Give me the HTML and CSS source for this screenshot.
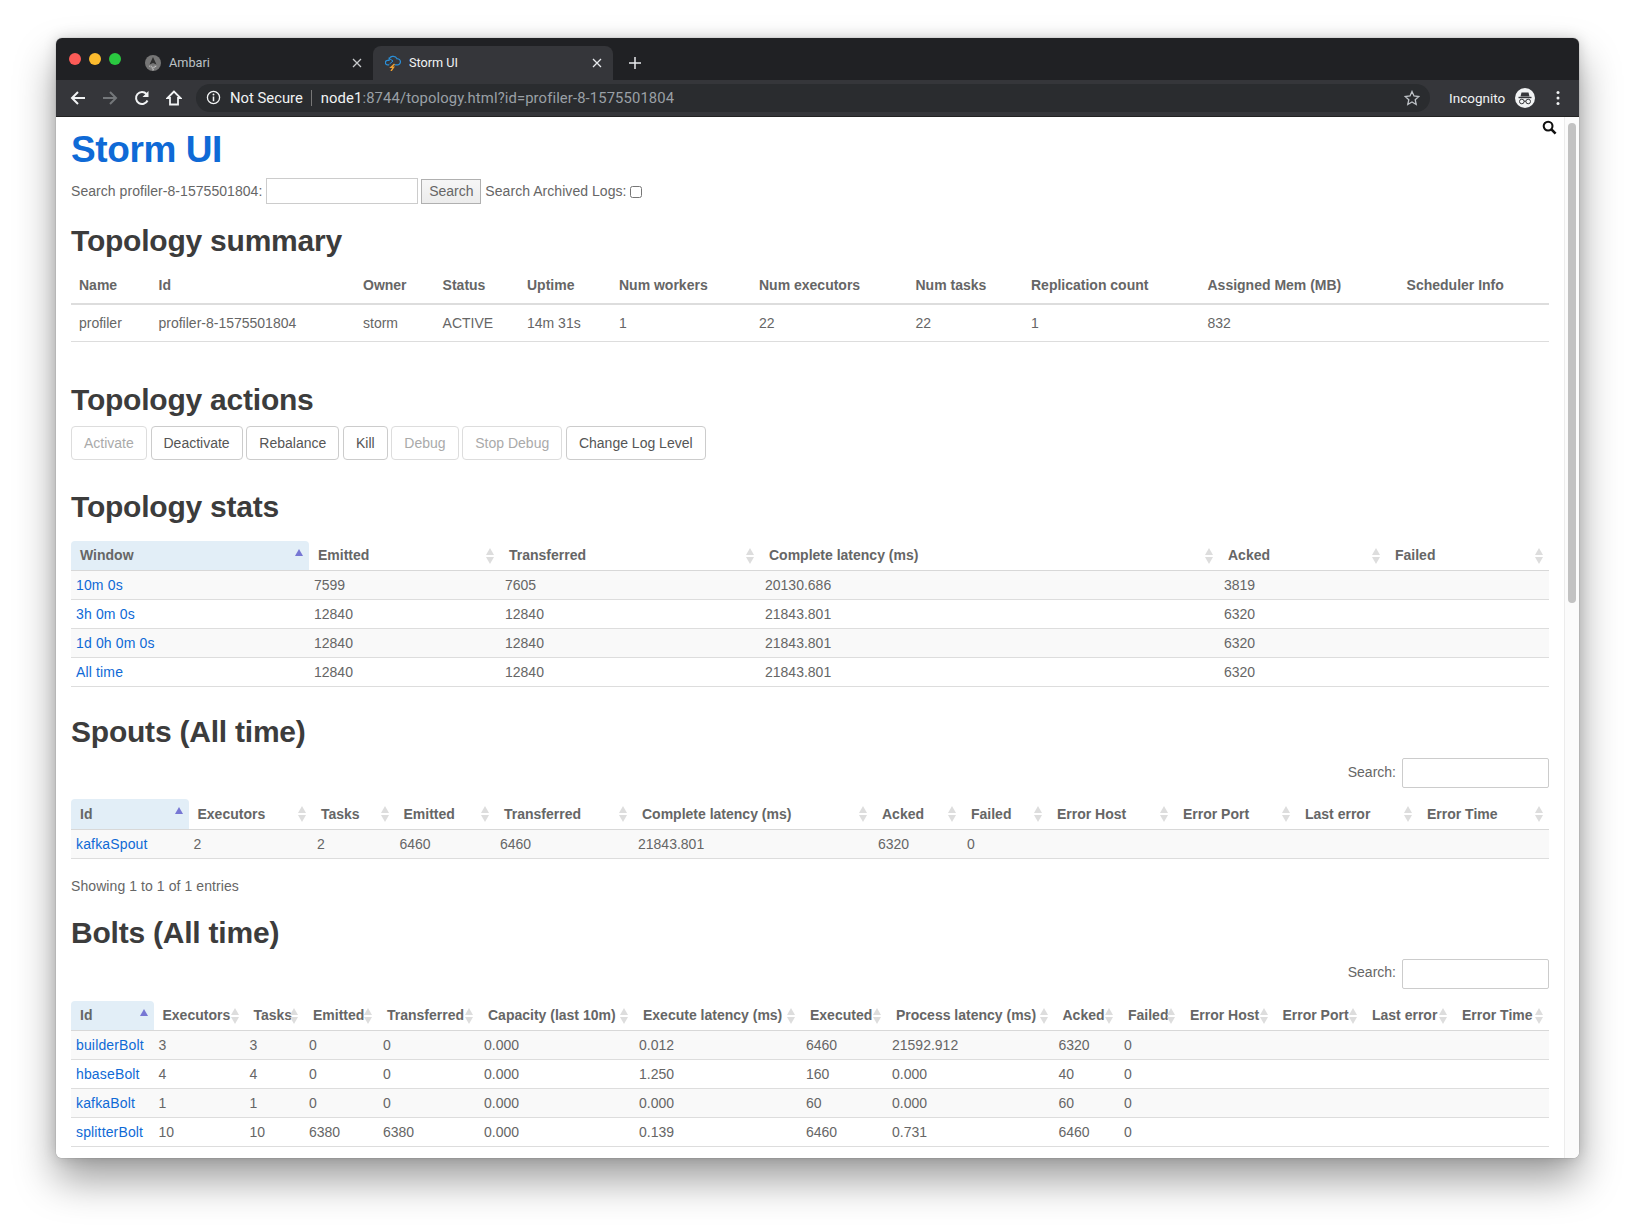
FILE: index.html
```html
<!DOCTYPE html>
<html lang="en">
<head>
<meta charset="utf-8">
<title>Storm UI</title>
<link rel="stylesheet" href="styles.css">
</head>
<body>
<div class="window">
  <div class="tabstrip">
    <div class="lights"><span class="light red"></span><span class="light yellow"></span><span class="light green"></span></div>
    <div class="tab">
      <svg class="favicon" viewBox="0 0 16 16"><circle cx="8" cy="8" r="8" fill="#767676"/><path d="M8 2 4.500 9.500 8 8l3.500 1.500z" fill="#2e2e2e"/><path d="M4 11c1.800.300 3 1.300 4 3.500 1-2.200 2.200-3.200 4-3.500" fill="none" stroke="#c4c4c4" stroke-width="1.200" stroke-dasharray="1 .8"/><path d="M6 10.500 8 13l2-2.500" fill="none" stroke="#b0b0b0" stroke-width=".8"/></svg>
      <span class="tab-title">Ambari</span>
      <svg class="tab-close" viewBox="0 0 10 10"><path d="M1 1l8 8M9 1l-8 8" stroke="#c8cacc" stroke-width="1.300"/></svg>
    </div>
    <div class="tab tab-active">
      <svg class="favicon" viewBox="0 0 16 16"><path d="M4 9.800H2.800a2.200 2.200 0 0 1-.3-4.400H4A4.200 4.200 0 0 1 12 3.800a3 3 0 0 1 .8 6H9.500" fill="none" stroke="#2a8fd8" stroke-width="1.200"/><path d="M3.500 3 8 6 4.500 9" fill="none" stroke="#2a8fd8" stroke-width="1"/><path d="M9.500 9 6 12.300h2.600L6 16" fill="none" stroke="#f0a030" stroke-width="1.400"/></svg>
      <span class="tab-title">Storm UI</span>
      <svg class="tab-close" viewBox="0 0 10 10"><path d="M1 1l8 8M9 1l-8 8" stroke="#e8eaed" stroke-width="1.300"/></svg>
    </div>
    <svg class="newtab" viewBox="0 0 12 12"><path d="M6 0v12M0 6h12" stroke="#e8eaed" stroke-width="1.500"/></svg>
  </div>
  <div class="toolbar">
    <svg class="nav" viewBox="0 0 16 16"><path d="M15 8H2M8 2 2 8l6 6" fill="none" stroke="#f1f3f4" stroke-width="2"/></svg>
    <svg class="nav" viewBox="0 0 16 16"><path d="M1 8h13M8 2l6 6-6 6" fill="none" stroke="#74777a" stroke-width="2"/></svg>
    <svg class="nav" viewBox="0 0 16 16"><path d="M13.500 10.500A6 6 0 1 1 12.500 4" fill="none" stroke="#f1f3f4" stroke-width="2"/><path d="M14.500 1v6h-6z" fill="#f1f3f4"/></svg>
    <svg class="nav" viewBox="0 0 16 16"><path d="M8 1.500 1.500 8H4v6.500h8V8h2.500z" fill="none" stroke="#f1f3f4" stroke-width="1.800"/></svg>
    <div class="omnibox">
      <svg class="info" viewBox="0 0 16 16"><circle cx="8" cy="8" r="6.500" fill="none" stroke="#f1f3f4" stroke-width="1.400"/><path d="M8 7v5" stroke="#f1f3f4" stroke-width="1.600"/><circle cx="8" cy="4.800" r="1" fill="#f1f3f4"/></svg>
      <span class="secure">Not Secure</span>
      <span class="omni-sep"></span>
      <span class="url"><b class="host">node1</b>:8744/topology.html?id=profiler-8-1575501804</span>
      <svg class="star" viewBox="0 0 16 16"><path d="M8 1.500 10 6l4.800.500-3.600 3.200 1 4.800L8 12l-4.200 2.500 1-4.800L1.200 6.500 6 6z" fill="none" stroke="#bdc1c6" stroke-width="1.300"/></svg>
    </div>
    <span class="incognito">Incognito</span>
    <svg class="incognito-icon" viewBox="0 0 20 20"><circle cx="10" cy="10" r="10" fill="#f1f3f4"/><path d="M6.500 4.500h7l1 4h-9z" fill="#35363a"/><rect x="3.500" y="8.800" width="13" height="1.400" fill="#35363a"/><circle cx="6.800" cy="13.500" r="2.300" fill="none" stroke="#35363a" stroke-width="1"/><circle cx="13.200" cy="13.500" r="2.300" fill="none" stroke="#35363a" stroke-width="1"/><path d="M9 13.200h2" stroke="#35363a"/></svg>
    <svg class="menu" viewBox="0 0 4 16"><circle cx="2" cy="2.500" r="1.500" fill="#f1f3f4"/><circle cx="2" cy="8" r="1.500" fill="#f1f3f4"/><circle cx="2" cy="13.500" r="1.500" fill="#f1f3f4"/></svg>
  </div>
  <div class="viewport">
    <main class="page">
      <svg class="page-search" viewBox="0 0 16 16"><circle cx="6.500" cy="6.500" r="4.700" fill="none" stroke="#111" stroke-width="2.200"/><path d="M10 10l4.500 4.500" stroke="#111" stroke-width="2.800"/></svg>
      <h1>Storm UI</h1>
      <form class="search-row">
        <label>Search profiler-8-1575501804:</label>
        <input class="search-input" type="text">
        <button class="search-btn" type="button">Search</button>
        <label>Search Archived Logs:</label>
        <input class="search-check" type="checkbox">
      </form>

      <h2 class="h-summary">Topology summary</h2>
      <table class="summary">
        <colgroup><col class="s1"><col class="s2"><col class="s3"><col class="s4"><col class="s5"><col class="s6"><col class="s7"><col class="s8"><col class="s9"><col class="s10"><col class="s11"></colgroup>
        <thead><tr><th>Name</th><th>Id</th><th>Owner</th><th>Status</th><th>Uptime</th><th>Num workers</th><th>Num executors</th><th>Num tasks</th><th>Replication count</th><th>Assigned Mem (MB)</th><th>Scheduler Info</th></tr></thead>
        <tbody><tr><td>profiler</td><td>profiler-8-1575501804</td><td>storm</td><td>ACTIVE</td><td>14m 31s</td><td>1</td><td>22</td><td>22</td><td>1</td><td>832</td><td></td></tr></tbody>
      </table>

      <h2 class="h-actions">Topology actions</h2>
      <div class="actions">
        <button class="btn" disabled type="button">Activate</button>
        <button class="btn" type="button">Deactivate</button>
        <button class="btn" type="button">Rebalance</button>
        <button class="btn" type="button">Kill</button>
        <button class="btn" disabled type="button">Debug</button>
        <button class="btn" disabled type="button">Stop Debug</button>
        <button class="btn" type="button">Change Log Level</button>
      </div>

      <h2 class="h-stats">Topology stats</h2>
      <table class="data stats">
        <colgroup><col class="t1"><col class="t2"><col class="t3"><col class="t4"><col class="t5"><col class="t6"></colgroup>
        <thead><tr><th class="sorted">Window</th><th>Emitted</th><th>Transferred</th><th>Complete latency (ms)</th><th>Acked</th><th>Failed</th></tr></thead>
        <tbody>
          <tr><td><a href="#">10m 0s</a></td><td>7599</td><td>7605</td><td>20130.686</td><td>3819</td><td></td></tr>
          <tr><td><a href="#">3h 0m 0s</a></td><td>12840</td><td>12840</td><td>21843.801</td><td>6320</td><td></td></tr>
          <tr><td><a href="#">1d 0h 0m 0s</a></td><td>12840</td><td>12840</td><td>21843.801</td><td>6320</td><td></td></tr>
          <tr><td><a href="#">All time</a></td><td>12840</td><td>12840</td><td>21843.801</td><td>6320</td><td></td></tr>
        </tbody>
      </table>

      <h2 class="h-spouts">Spouts (All time)</h2>
      <div class="filter"><label>Search:</label><input class="filter-input" type="text"></div>
      <table class="data spouts">
        <colgroup><col class="p1"><col class="p2"><col class="p3"><col class="p4"><col class="p5"><col class="p6"><col class="p7"><col class="p8"><col class="p9"><col class="p10"><col class="p11"><col class="p12"></colgroup>
        <thead><tr><th class="sorted">Id</th><th>Executors</th><th>Tasks</th><th>Emitted</th><th>Transferred</th><th>Complete latency (ms)</th><th>Acked</th><th>Failed</th><th>Error Host</th><th>Error Port</th><th>Last error</th><th>Error Time</th></tr></thead>
        <tbody><tr><td><a href="#">kafkaSpout</a></td><td>2</td><td>2</td><td>6460</td><td>6460</td><td>21843.801</td><td>6320</td><td>0</td><td></td><td></td><td></td><td></td></tr></tbody>
      </table>
      <p class="showing">Showing 1 to 1 of 1 entries</p>

      <h2 class="h-bolts">Bolts (All time)</h2>
      <div class="filter"><label>Search:</label><input class="filter-input" type="text"></div>
      <table class="data bolts">
        <colgroup><col class="b1"><col class="b2"><col class="b3"><col class="b4"><col class="b5"><col class="b6"><col class="b7"><col class="b8"><col class="b9"><col class="b10"><col class="b11"><col class="b12"><col class="b13"><col class="b14"><col class="b15"></colgroup>
        <thead><tr><th class="sorted">Id</th><th>Executors</th><th>Tasks</th><th>Emitted</th><th>Transferred</th><th>Capacity (last 10m)</th><th>Execute latency (ms)</th><th>Executed</th><th>Process latency (ms)</th><th>Acked</th><th>Failed</th><th>Error Host</th><th>Error Port</th><th>Last error</th><th>Error Time</th></tr></thead>
        <tbody>
          <tr><td><a href="#">builderBolt</a></td><td>3</td><td>3</td><td>0</td><td>0</td><td>0.000</td><td>0.012</td><td>6460</td><td>21592.912</td><td>6320</td><td>0</td><td></td><td></td><td></td><td></td></tr>
          <tr><td><a href="#">hbaseBolt</a></td><td>4</td><td>4</td><td>0</td><td>0</td><td>0.000</td><td>1.250</td><td>160</td><td>0.000</td><td>40</td><td>0</td><td></td><td></td><td></td><td></td></tr>
          <tr><td><a href="#">kafkaBolt</a></td><td>1</td><td>1</td><td>0</td><td>0</td><td>0.000</td><td>0.000</td><td>60</td><td>0.000</td><td>60</td><td>0</td><td></td><td></td><td></td><td></td></tr>
          <tr><td><a href="#">splitterBolt</a></td><td>10</td><td>10</td><td>6380</td><td>6380</td><td>0.000</td><td>0.139</td><td>6460</td><td>0.731</td><td>6460</td><td>0</td><td></td><td></td><td></td><td></td></tr>
        </tbody>
      </table>
    </main>
    <div class="scrollbar"><div class="thumb"></div></div>
  </div>
</div>
</body>
</html>
```
FILE: styles.css
```css
* { box-sizing: border-box; }
html, body { margin: 0; padding: 0; background: #fff; }
body { padding: 38px 56px 0; height: 1232px; overflow: hidden; font-family: "Liberation Sans", Arial, sans-serif; }

.window {
  width: 1523px; height: 1120px; border-radius: 6px; overflow: hidden;
  display: flex; flex-direction: column; background: #fff;
  box-shadow: 0 22px 40px rgba(0,0,0,.38), 0 0 14px rgba(0,0,0,.16), 0 0 1px rgba(0,0,0,.5);
}

/* browser chrome */
.tabstrip { height: 42px; flex: none; background: #202124; display: flex; align-items: flex-end; padding-left: 13px; font-family: Roboto, "Liberation Sans", sans-serif; }
.lights { display: flex; gap: 8px; align-self: flex-start; padding-top: 15px; width: 64px; flex: none; }
.light { width: 12px; height: 12px; border-radius: 50%; }
.red { background: #fc5b57; }
.yellow { background: #fcbb2e; }
.green { background: #2ac840; }
.tab { width: 240px; height: 34px; flex: none; display: flex; align-items: center; padding: 0 11px 0 12px; color: #bdc1c6; font-size: 12.700px; border-radius: 8px 8px 0 0; }
.tab-active { background: #35363a; color: #f1f3f4; }
.favicon { width: 16px; height: 16px; flex: none; margin: 0 8px 0 0; }
.tab-title { flex: 1; padding-bottom: 2px; }
.tab-close { width: 10px; height: 10px; flex: none; }
.newtab { width: 12px; height: 12px; margin: 0 0 11px 16px; flex: none; }

.toolbar { height: 37px; flex: none; background: #35363a; display: flex; align-items: center; padding: 0 16px 1px 14px; border-bottom: 1px solid #222; font-family: Roboto, "Liberation Sans", sans-serif; }
.nav { width: 16px; height: 16px; flex: none; margin-right: 16px; }
.omnibox { width: 1234px; height: 28px; margin-left: -2px; flex: none; background: #2a2c2f; border-radius: 14px; display: flex; align-items: center; padding: 0 10px 0 10px; font-size: 14.800px; color: #9aa0a6; }
.info { width: 15px; height: 15px; flex: none; }
.secure { color: #f1f3f4; margin-left: 9px; }
.omni-sep { width: 1px; height: 16px; background: #777; margin: 0 9px 0 8px; }
.url { flex: 1; letter-spacing: .12px; }
.host { color: #f1f3f4; font-weight: 400; }
.star { width: 16px; height: 16px; flex: none; margin-right: 0; }
.incognito { color: #f1f3f4; font-size: 13.500px; margin-left: 19px; width: 66px; flex: none; }
.incognito-icon { width: 20px; height: 20px; flex: none; }
.menu { width: 4px; height: 16px; flex: none; margin-left: 21px; }

/* page */
.viewport { flex: 1; min-height: 0; display: flex; background: #fff; }
.page { flex: 1; min-width: 0; padding: 0 15px; position: relative; color: #666; font-size: 14px; overflow: hidden; }
.page-search { position: absolute; top: 3px; right: 7px; width: 15px; height: 15px; }
.scrollbar { width: 15px; flex: none; background: #fbfbfb; border-left: 1px solid #ececec; padding: 6px 3px 0; }
.thumb { width: 8px; height: 480px; border-radius: 4px; background: #c2c2c2; }

h1 { margin: 13px 0 0; font-size: 37px; line-height: 40px; font-weight: 700; color: #0f6ad6; letter-spacing: -.4px; }
h2 { margin: 0; font-size: 30px; line-height: 36px; font-weight: 700; color: #3c3c3c; letter-spacing: -.22px; }
.search-row { display: flex; align-items: center; margin-top: 8px; height: 26px; }
.search-row label { letter-spacing: .05px; }
.search-input { width: 152px; height: 26px; margin: 0 3px 0 4px; border: 1px solid #ccc; background: #fff; padding: 0; }
.search-btn { width: 60px; height: 25px; margin: 0 4px 0 0; border: 1px solid #b0b0b0; background: linear-gradient(#f6f6f6, #ececec); font: 14px "Liberation Sans", Arial, sans-serif; color: #666; padding: 0; }
.search-check { width: 12px; height: 12px; margin: 2px 0 0 3px; }

.h-summary { margin-top: 19px; }
.h-actions { margin-top: 40px; }
.h-stats { margin-top: 29px; }
.h-spouts { margin-top: 27px; }
.h-bolts { margin-top: 21px; }

table { border-collapse: collapse; table-layout: fixed; width: 1478px; font-size: 14px; }
th { font-weight: 700; text-align: left; }

.summary { margin-top: 6px; }
.summary th { padding: 9px 8px 7px; height: 39px; border-bottom: 2px solid #ddd; color: #666; }
.summary td { padding: 8px; height: 37px; border-bottom: 1px solid #ddd; }
.s1 { width: 79.500px; } .s2 { width: 204.500px; } .s3 { width: 79.600px; } .s4 { width: 84.400px; } .s5 { width: 92px; } .s6 { width: 140px; } .s7 { width: 156.500px; } .s8 { width: 115.500px; } .s9 { width: 176.500px; } .s10 { width: 199.100px; } .s11 { width: 150.400px; }

.actions { display: flex; gap: 3.700px; margin-top: 8px; }
.btn { height: 34px; padding: 0 12px; border: 1px solid #ccc; border-radius: 4px; background: #fff; color: #555; font: 14px "Liberation Sans", Arial, sans-serif; }
.btn:disabled { color: #aaa; border-color: #ddd; }

.data th { position: relative; height: 30px; padding: 0 9px; border-bottom: 1px solid #d8d8d8; color: #666; white-space: nowrap; }
.data td { height: 29px; padding: 0 5px; border-bottom: 1px solid #ddd; white-space: nowrap; }
.data tbody tr:nth-child(odd) td { background: #f9f9f9; }
.data th::before, .data th::after { content: ""; position: absolute; right: 6px; border-left: 4px solid transparent; border-right: 4px solid transparent; }
.data th::before { top: 7px; border-bottom: 7px solid #ddd; }
.data th::after { top: 16px; border-top: 7px solid #ddd; }
.data th.sorted { background: #e2eef7; border-radius: 4px 4px 0 0; }
.data th.sorted::before { top: 8px; right: 6px; border-bottom: 7px solid #7777d4; }
.data th.sorted::after { display: none; }
.data a { color: #0f6ad6; text-decoration: none; letter-spacing: .15px; }

.stats { margin-top: 16px; }
.t1 { width: 238px; } .t2 { width: 191px; } .t3 { width: 260px; } .t4 { width: 459px; } .t5 { width: 167px; } .t6 { width: 163px; }

.filter { display: flex; justify-content: flex-end; align-items: center; gap: 6px; margin-top: 8px; height: 30px; }
.filter label { padding-bottom: 3px; }
.filter-input { width: 147px; height: 30px; border: 1px solid #ccc; border-radius: 2px; background: #fff; padding: 0; }

.spouts { margin-top: 11px; }
.p1 { width: 117.500px; } .p2 { width: 123.500px; } .p3 { width: 82.500px; } .p4 { width: 100.500px; } .p5 { width: 138px; } .p6 { width: 240px; } .p7 { width: 89px; } .p8 { width: 86px; } .p9 { width: 126px; } .p10 { width: 122px; } .p11 { width: 122px; } .p12 { width: 131px; }

.showing { margin: 19px 0 0; line-height: 16px; letter-spacing: .08px; }

.bolts { margin-top: 12px; }
.b1 { width: 82.500px; } .b2 { width: 91px; } .b3 { width: 59.500px; } .b4 { width: 74px; } .b5 { width: 101px; } .b6 { width: 155px; } .b7 { width: 167px; } .b8 { width: 86px; } .b9 { width: 166.500px; } .b10 { width: 65.500px; } .b11 { width: 62px; } .b12 { width: 92.500px; } .b13 { width: 89.500px; } .b14 { width: 90px; } .b15 { width: 96px; }
```
